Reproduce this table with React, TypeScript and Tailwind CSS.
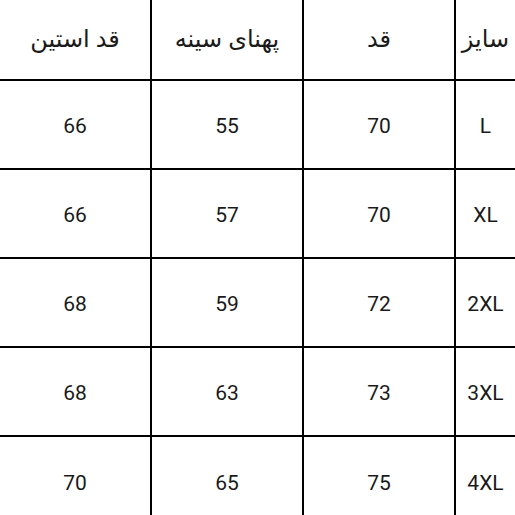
import React from 'react';

const header = ['قد استین', 'پهنای سینه', 'قد', 'سایز'];

const rows = [
  ['66', '55', '70', 'L'],
  ['66', '57', '70', 'XL'],
  ['68', '59', '72', '2XL'],
  ['68', '63', '73', '3XL'],
  ['70', '65', '75', '4XL'],
];

function Row({ cells, head, last }: { cells: string[]; head?: boolean; last?: boolean }) {
  return (
    <div
      className={`flex shrink-0 ${head ? 'h-[81px]' : 'h-[89px]'} ${last ? '' : 'border-b-2 border-black'}`}
    >
      {cells.map((c, i) => (
        <div
          key={i}
          className={`flex items-center justify-center ${i < 3 ? 'w-[152px] border-r-2 border-black' : 'flex-1'} ${head ? 'pb-[2px] text-[24px]' : 'pt-[4px]'}`}
        >
          <span dir={head ? 'rtl' : 'ltr'}>{c}</span>
        </div>
      ))}
    </div>
  );
}

export default function App() {
  return (
    <div
      className="w-[515px] h-[515px] bg-white text-[#1a1a1a] text-[21px] flex flex-col overflow-hidden"
      style={{ fontFamily: 'Roboto, "DejaVu Sans", sans-serif' }}
    >
      <Row cells={header} head />
      {rows.map((r, i) => (
        <Row key={i} cells={r} last={i === rows.length - 1} />
      ))}
    </div>
  );
}
